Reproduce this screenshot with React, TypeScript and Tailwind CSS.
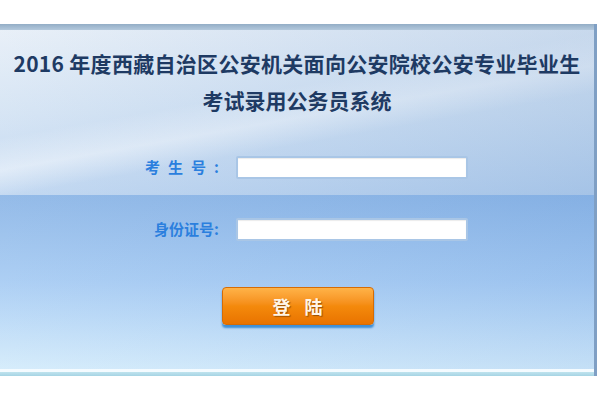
import React from 'react';

const cjk = { fontFamily: '"Noto Sans CJK SC", "Noto Sans", sans-serif' };

function Field({ label, spaced }: { label: string; spaced?: boolean }) {
  return (
    <div className="flex items-center h-[24px]">
      <div className="w-[219px] text-right text-[15px] font-bold text-[#2b7fde]">
        <span className={spaced ? 'tracking-[8px]' : ''}>{label}</span>
        <span>:</span>
      </div>
      <div className="ml-[17px] w-[232px] h-[23px] bg-white border-[2px] border-[#a9c6e6] rounded-[2px] shadow-[inset_0_1px_1px_rgba(0,0,0,0.08)]" />
    </div>
  );
}

export default function App() {
  return (
    <div className="w-[600px] h-[400px] bg-white pt-[24px]" style={cjk}>
      <div className="relative w-[597px] h-[352px] flex flex-col overflow-hidden border-r-[3px] border-[#7f9fc4]">
        <div className="h-[6px] bg-gradient-to-b from-[#93adc6] to-[#b3c8dc]" />
        <div className="relative h-[165px] bg-gradient-to-b from-[#e3ecf6] via-[#cddff2] to-[#b4cfee]">
          <div className="absolute inset-0 bg-[linear-gradient(170deg,rgba(255,255,255,0)_0%,rgba(255,255,255,0)_40%,rgba(255,255,255,0.45)_52%,rgba(255,255,255,0)_62%)]" />
          <div className="absolute inset-0 bg-gradient-to-r from-[rgba(255,255,255,0.2)] to-[rgba(120,160,210,0.25)]" />
          <div className="relative flex flex-col items-center pt-[18px]">
            <div className="text-[21px] leading-[30px] font-bold text-[#1e3a63] tracking-[0.3px]">2016 年度西藏自治区公安机关面向公安院校公安专业毕业生</div>
            <div className="mt-[7px] text-[21px] leading-[30px] font-bold text-[#1e3a63]">考试录用公务员系统</div>
          </div>
          <div className="relative mt-[40px]">
            <Field label="考生号" spaced />
          </div>
        </div>
        <div className="relative flex-1 bg-gradient-to-b from-[#8bb5e6] via-[#a6cbf3] to-[#d3ebfb]">
          <div className="absolute inset-0 bg-gradient-to-r from-[rgba(255,255,255,0.08)] to-[rgba(90,140,210,0.12)]" />
          <div className="relative pt-[22px]">
            <Field label="身份证号" />
          </div>
          <div className="relative flex justify-center mt-[46px] pl-[1px]">
            <div className="w-[152px] h-[38px] rounded-[4px] bg-gradient-to-b from-[#ffb347] via-[#f48a0c] to-[#e97300] border border-[#d56c05] shadow-[0_3px_2px_#3f8fd6] flex items-center justify-center">
              <span className="text-[18px] font-bold text-[#fff6e8] tracking-[14px] pl-[14px] [text-shadow:1px_1px_1px_rgba(120,60,0,0.7)]">登陆</span>
            </div>
          </div>
        </div>
        <div className="h-[3px] bg-[#f4fbff]" />
        <div className="h-[4px] bg-gradient-to-b from-[#bfe3ee] to-[#a6d4e4]" />
      </div>
    </div>
  );
}
